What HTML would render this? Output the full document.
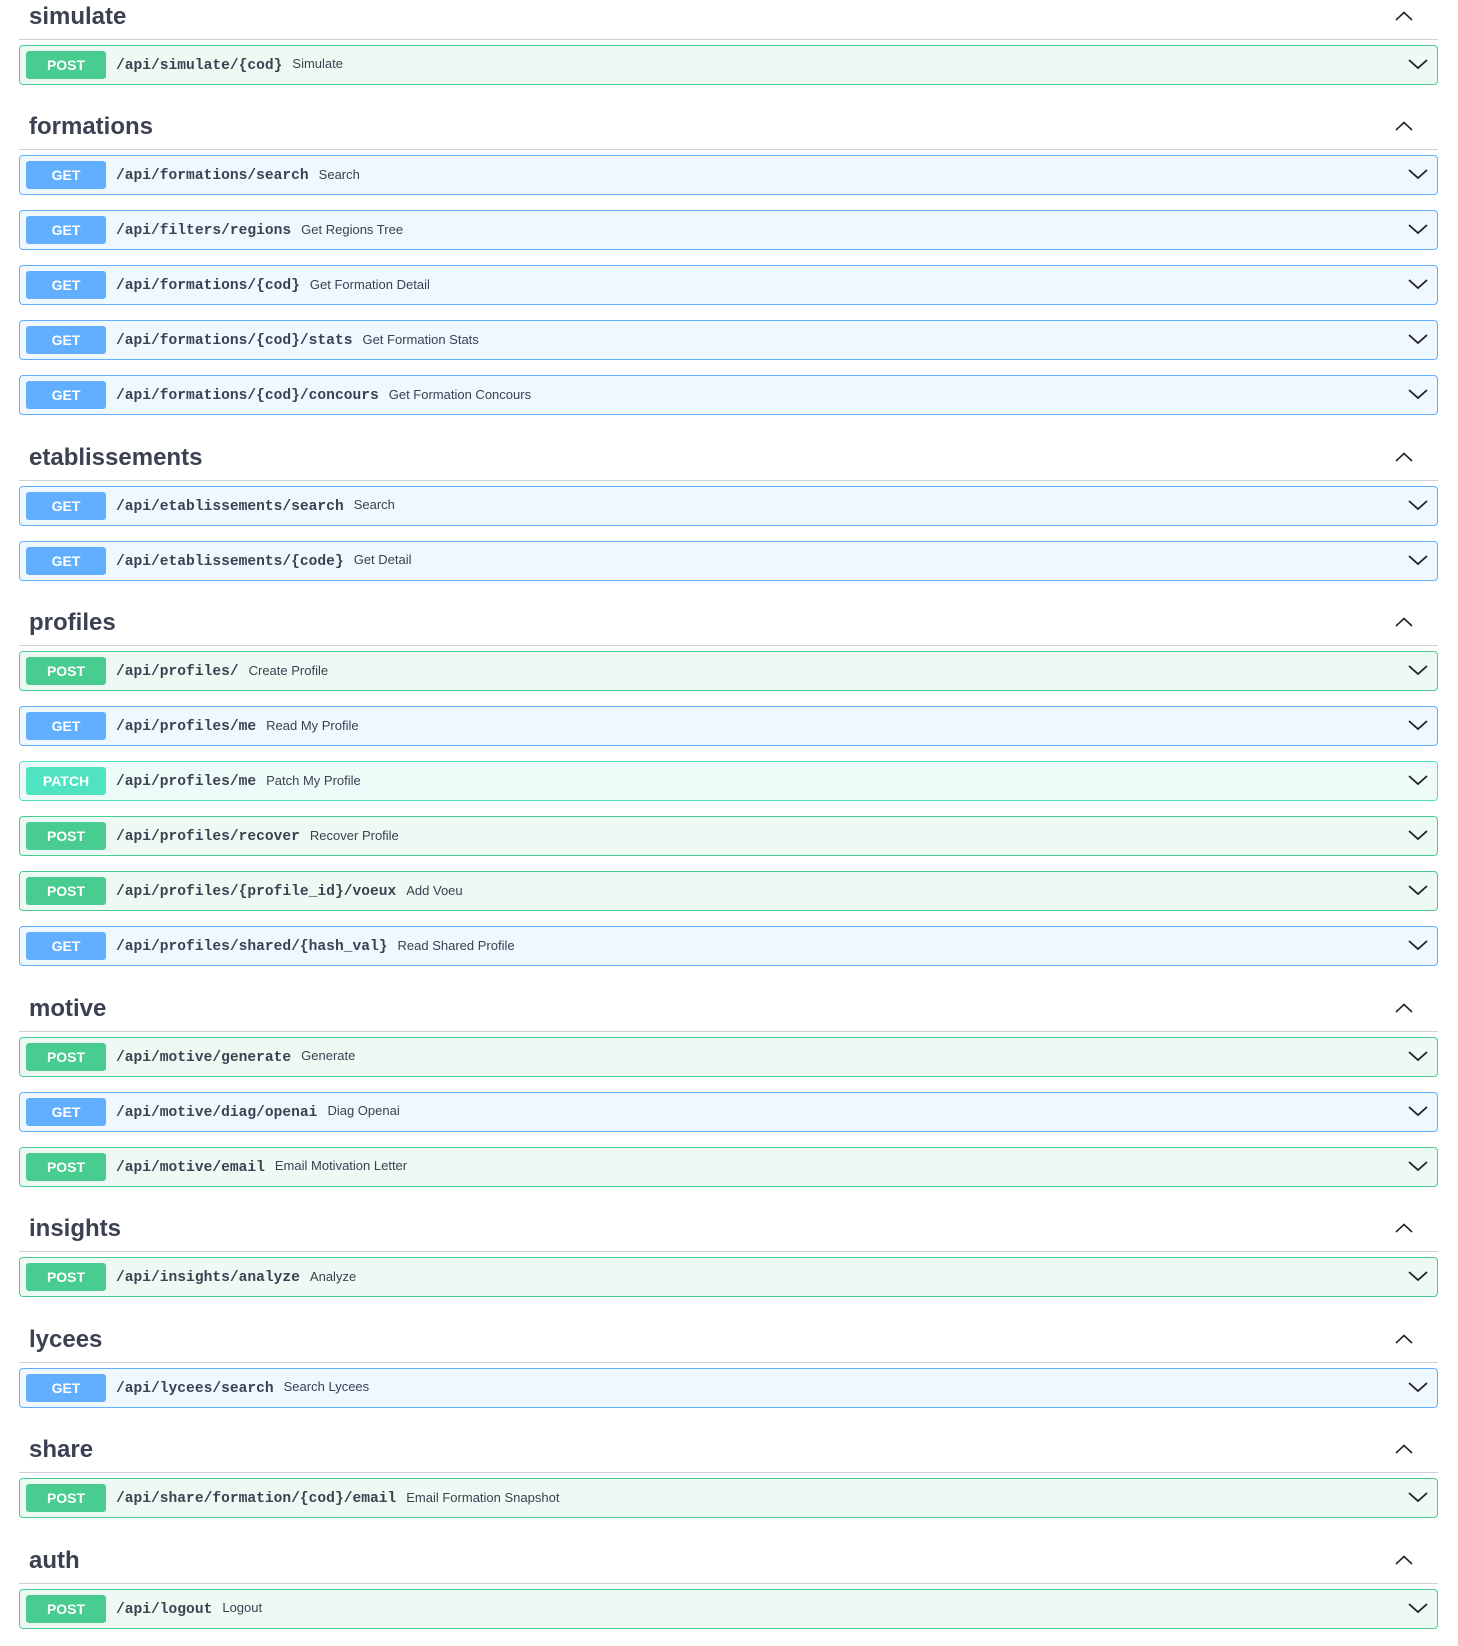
<!DOCTYPE html>
<html><head><meta charset="utf-8"><style>
*{box-sizing:border-box}
body{margin:0;padding-top:0;background:#fff;font-family:"Liberation Sans",Arial,sans-serif;color:#3b4151;width:1458px;height:1646px;overflow:hidden}
.wrap{position:relative;margin-top:-11px}
.h{position:relative;margin:0 20px 0 19px;height:50.5px;border-bottom:1px solid #d0d0d4}
.h span{position:absolute;left:10px;bottom:10px;font-size:24px;font-weight:bold;line-height:24px}
.h svg{position:absolute;right:25px;bottom:18px}
.op{position:relative;margin:5px 20px 15px 19px;height:40px;border:1px solid;border-radius:4px;display:flex;align-items:center}
.op+.op{margin-top:0}
.b{margin-left:6px;width:80px;height:28px;border-radius:3px;color:#fff;font-weight:bold;font-size:14px;text-align:center;line-height:28px}
.p{font-family:"Liberation Mono",monospace;font-weight:bold;font-size:14.6px;margin-left:10px;color:#3b4151;position:relative;top:1px}
.s{font-size:13px;margin-left:10px;color:#3b4151;position:relative;top:-1px}
.op svg{position:absolute;right:9px;top:12px}
.post{background:#edfaf4;border-color:#49cc90}.post .b{background:#49cc90}
.get{background:#eff7ff;border-color:#61affe}.get .b{background:#61affe}
.patch{background:#eefcf9;border-color:#50e3c2}.patch .b{background:#50e3c2}
</style></head><body><div class="wrap">
<div class="h"><span>simulate</span><svg width="18" height="10" viewBox="0 0 18 10"><path d="M1 9L9 1.5L17 9" fill="none" stroke="#222" stroke-width="1.6"/></svg></div>
<div class="op post"><div class="b">POST</div><div class="p">/api/simulate/{cod}</div><div class="s">Simulate</div><svg width="20" height="12" viewBox="0 0 20 12"><path d="M1 2L10 10L19 2" fill="none" stroke="#222" stroke-width="1.8"/></svg></div>

<div class="h"><span>formations</span><svg width="18" height="10" viewBox="0 0 18 10"><path d="M1 9L9 1.5L17 9" fill="none" stroke="#222" stroke-width="1.6"/></svg></div>
<div class="op get"><div class="b">GET</div><div class="p">/api/formations/search</div><div class="s">Search</div><svg width="20" height="12" viewBox="0 0 20 12"><path d="M1 2L10 10L19 2" fill="none" stroke="#222" stroke-width="1.8"/></svg></div>
<div class="op get"><div class="b">GET</div><div class="p">/api/filters/regions</div><div class="s">Get Regions Tree</div><svg width="20" height="12" viewBox="0 0 20 12"><path d="M1 2L10 10L19 2" fill="none" stroke="#222" stroke-width="1.8"/></svg></div>
<div class="op get"><div class="b">GET</div><div class="p">/api/formations/{cod}</div><div class="s">Get Formation Detail</div><svg width="20" height="12" viewBox="0 0 20 12"><path d="M1 2L10 10L19 2" fill="none" stroke="#222" stroke-width="1.8"/></svg></div>
<div class="op get"><div class="b">GET</div><div class="p">/api/formations/{cod}/stats</div><div class="s">Get Formation Stats</div><svg width="20" height="12" viewBox="0 0 20 12"><path d="M1 2L10 10L19 2" fill="none" stroke="#222" stroke-width="1.8"/></svg></div>
<div class="op get"><div class="b">GET</div><div class="p">/api/formations/{cod}/concours</div><div class="s">Get Formation Concours</div><svg width="20" height="12" viewBox="0 0 20 12"><path d="M1 2L10 10L19 2" fill="none" stroke="#222" stroke-width="1.8"/></svg></div>

<div class="h"><span>etablissements</span><svg width="18" height="10" viewBox="0 0 18 10"><path d="M1 9L9 1.5L17 9" fill="none" stroke="#222" stroke-width="1.6"/></svg></div>
<div class="op get"><div class="b">GET</div><div class="p">/api/etablissements/search</div><div class="s">Search</div><svg width="20" height="12" viewBox="0 0 20 12"><path d="M1 2L10 10L19 2" fill="none" stroke="#222" stroke-width="1.8"/></svg></div>
<div class="op get"><div class="b">GET</div><div class="p">/api/etablissements/{code}</div><div class="s">Get Detail</div><svg width="20" height="12" viewBox="0 0 20 12"><path d="M1 2L10 10L19 2" fill="none" stroke="#222" stroke-width="1.8"/></svg></div>

<div class="h"><span>profiles</span><svg width="18" height="10" viewBox="0 0 18 10"><path d="M1 9L9 1.5L17 9" fill="none" stroke="#222" stroke-width="1.6"/></svg></div>
<div class="op post"><div class="b">POST</div><div class="p">/api/profiles/</div><div class="s">Create Profile</div><svg width="20" height="12" viewBox="0 0 20 12"><path d="M1 2L10 10L19 2" fill="none" stroke="#222" stroke-width="1.8"/></svg></div>
<div class="op get"><div class="b">GET</div><div class="p">/api/profiles/me</div><div class="s">Read My Profile</div><svg width="20" height="12" viewBox="0 0 20 12"><path d="M1 2L10 10L19 2" fill="none" stroke="#222" stroke-width="1.8"/></svg></div>
<div class="op patch"><div class="b">PATCH</div><div class="p">/api/profiles/me</div><div class="s">Patch My Profile</div><svg width="20" height="12" viewBox="0 0 20 12"><path d="M1 2L10 10L19 2" fill="none" stroke="#222" stroke-width="1.8"/></svg></div>
<div class="op post"><div class="b">POST</div><div class="p">/api/profiles/recover</div><div class="s">Recover Profile</div><svg width="20" height="12" viewBox="0 0 20 12"><path d="M1 2L10 10L19 2" fill="none" stroke="#222" stroke-width="1.8"/></svg></div>
<div class="op post"><div class="b">POST</div><div class="p">/api/profiles/{profile_id}/voeux</div><div class="s">Add Voeu</div><svg width="20" height="12" viewBox="0 0 20 12"><path d="M1 2L10 10L19 2" fill="none" stroke="#222" stroke-width="1.8"/></svg></div>
<div class="op get"><div class="b">GET</div><div class="p">/api/profiles/shared/{hash_val}</div><div class="s">Read Shared Profile</div><svg width="20" height="12" viewBox="0 0 20 12"><path d="M1 2L10 10L19 2" fill="none" stroke="#222" stroke-width="1.8"/></svg></div>

<div class="h"><span>motive</span><svg width="18" height="10" viewBox="0 0 18 10"><path d="M1 9L9 1.5L17 9" fill="none" stroke="#222" stroke-width="1.6"/></svg></div>
<div class="op post"><div class="b">POST</div><div class="p">/api/motive/generate</div><div class="s">Generate</div><svg width="20" height="12" viewBox="0 0 20 12"><path d="M1 2L10 10L19 2" fill="none" stroke="#222" stroke-width="1.8"/></svg></div>
<div class="op get"><div class="b">GET</div><div class="p">/api/motive/diag/openai</div><div class="s">Diag Openai</div><svg width="20" height="12" viewBox="0 0 20 12"><path d="M1 2L10 10L19 2" fill="none" stroke="#222" stroke-width="1.8"/></svg></div>
<div class="op post"><div class="b">POST</div><div class="p">/api/motive/email</div><div class="s">Email Motivation Letter</div><svg width="20" height="12" viewBox="0 0 20 12"><path d="M1 2L10 10L19 2" fill="none" stroke="#222" stroke-width="1.8"/></svg></div>

<div class="h"><span>insights</span><svg width="18" height="10" viewBox="0 0 18 10"><path d="M1 9L9 1.5L17 9" fill="none" stroke="#222" stroke-width="1.6"/></svg></div>
<div class="op post"><div class="b">POST</div><div class="p">/api/insights/analyze</div><div class="s">Analyze</div><svg width="20" height="12" viewBox="0 0 20 12"><path d="M1 2L10 10L19 2" fill="none" stroke="#222" stroke-width="1.8"/></svg></div>

<div class="h"><span>lycees</span><svg width="18" height="10" viewBox="0 0 18 10"><path d="M1 9L9 1.5L17 9" fill="none" stroke="#222" stroke-width="1.6"/></svg></div>
<div class="op get"><div class="b">GET</div><div class="p">/api/lycees/search</div><div class="s">Search Lycees</div><svg width="20" height="12" viewBox="0 0 20 12"><path d="M1 2L10 10L19 2" fill="none" stroke="#222" stroke-width="1.8"/></svg></div>

<div class="h"><span>share</span><svg width="18" height="10" viewBox="0 0 18 10"><path d="M1 9L9 1.5L17 9" fill="none" stroke="#222" stroke-width="1.6"/></svg></div>
<div class="op post"><div class="b">POST</div><div class="p">/api/share/formation/{cod}/email</div><div class="s">Email Formation Snapshot</div><svg width="20" height="12" viewBox="0 0 20 12"><path d="M1 2L10 10L19 2" fill="none" stroke="#222" stroke-width="1.8"/></svg></div>

<div class="h"><span>auth</span><svg width="18" height="10" viewBox="0 0 18 10"><path d="M1 9L9 1.5L17 9" fill="none" stroke="#222" stroke-width="1.6"/></svg></div>
<div class="op post"><div class="b">POST</div><div class="p">/api/logout</div><div class="s">Logout</div><svg width="20" height="12" viewBox="0 0 20 12"><path d="M1 2L10 10L19 2" fill="none" stroke="#222" stroke-width="1.8"/></svg></div>
</div></body></html>
